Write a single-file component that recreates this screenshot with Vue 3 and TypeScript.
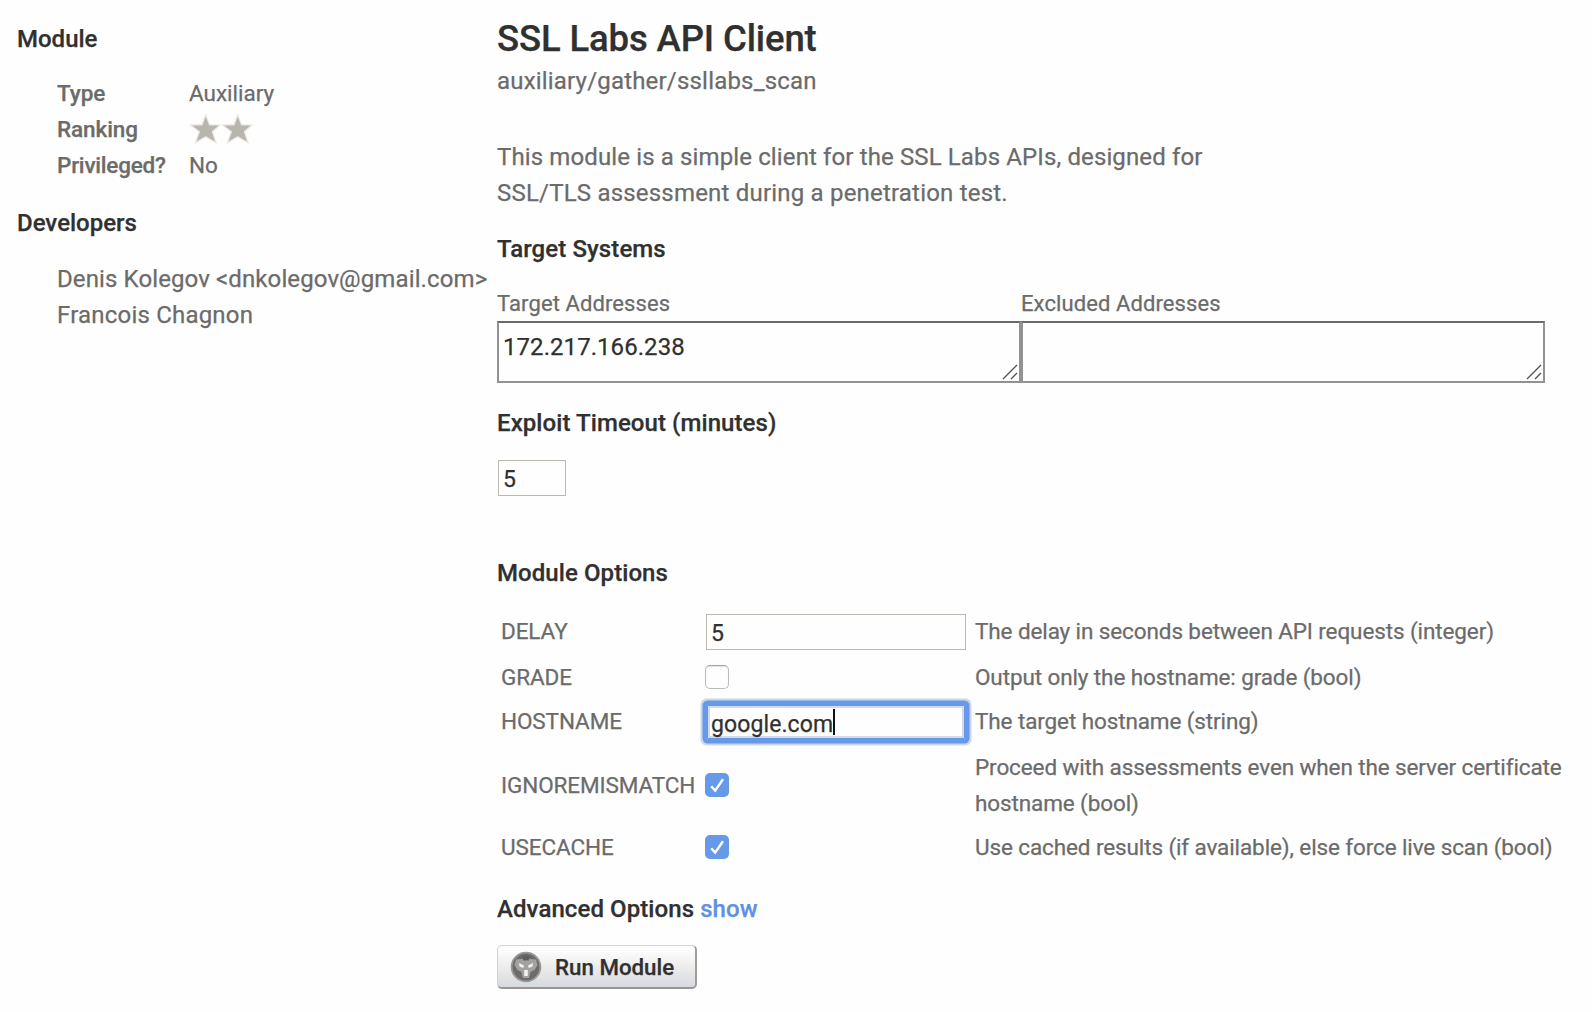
<script setup lang="ts">
interface Option {
  name: string
  kind: 'text' | 'focus' | 'off' | 'on'
  value?: string
  description: string[]
}

const options: Option[] = [
  { name: 'DELAY', kind: 'text', value: '5', description: ['The delay in seconds between API requests (integer)'] },
  { name: 'GRADE', kind: 'off', description: ['Output only the hostname: grade (bool)'] },
  { name: 'HOSTNAME', kind: 'focus', value: 'google.com', description: ['The target hostname (string)'] },
  { name: 'IGNOREMISMATCH', kind: 'on', description: ['Proceed with assessments even when the server certificate', 'hostname (bool)'] },
  { name: 'USECACHE', kind: 'on', description: ['Use cached results (if available), else force live scan (bool)'] },
]

const addressColumns = [
  { label: 'Target Addresses', value: '172.217.166.238' },
  { label: 'Excluded Addresses', value: '' },
]
</script>

<template>
  <div class="page">
    <aside class="side">
      <h3>Module</h3>
      <dl class="facts">
        <dt>Type</dt>
        <dd>Auxiliary</dd>
        <dt>Ranking</dt>
        <dd class="stars">
          <svg v-for="n in 2" :key="n" width="32" height="32" viewBox="0 0 32 32">
            <path d="M16.7 2 L20.5 11.8 L31 12 L23.4 18.8 L27 29.8 L16.7 23.8 L6.4 29.8 L10.4 18.8 L1.4 12 L13 11.8 Z" />
          </svg>
        </dd>
        <dt class="tight">Privileged?</dt>
        <dd>No</dd>
      </dl>
      <h3>Developers</h3>
      <p class="devs">Denis Kolegov &lt;dnkolegov@gmail.com&gt;<br><span class="wide">Francois Chagnon</span></p>
    </aside>

    <main class="main">
      <h1>SSL Labs API Client</h1>
      <p class="path">auxiliary/gather/ssllabs_scan</p>
      <p class="about">This module is a simple client for the SSL Labs APIs, designed for<br><span class="wide">SSL/TLS assessment during a penetration test.</span></p>

      <h3 class="h-target">Target Systems</h3>
      <div class="addresses">
        <div v-for="c in addressColumns" :key="c.label" class="col">
          <label>{{ c.label }}</label>
          <div class="area">
            {{ c.value }}
            <svg class="grip" width="16" height="16" viewBox="0 0 16 16"><path d="M1 15 L15 1 M9 15 L15 9" /></svg>
          </div>
        </div>
      </div>

      <h3 class="h-timeout">Exploit Timeout (minutes)</h3>
      <div class="field small">5</div>

      <h3 class="h-options">Module Options</h3>
      <div class="options">
        <div v-for="o in options" :key="o.name" class="row">
          <div class="name">{{ o.name }}</div>
          <div class="control">
            <div v-if="o.kind === 'text'" class="field">{{ o.value }}</div>
            <div v-else-if="o.kind === 'focus'" class="field focus">{{ o.value }}<i class="caret"></i></div>
            <div v-else class="check" :class="o.kind">
              <svg v-if="o.kind === 'on'" width="24" height="24" viewBox="0 0 24 24"><path d="M6.2 13.2 L10.2 17.6 L18 6.3" /></svg>
            </div>
          </div>
          <div class="desc"><template v-for="(d, i) in o.description" :key="i"><br v-if="i">{{ d }}</template></div>
        </div>
      </div>

      <h3 class="h-advanced">Advanced Options <a>show</a></h3>
      <button class="run" type="button">
        <svg width="32" height="32" viewBox="0 0 32 32">
          <circle cx="16" cy="16" r="14.4" fill="#6c6c6c" stroke="#9b9a98" stroke-width="1.8" />
          <path d="M16 4.5 L20 8 L26 8.5 L27.5 14 L24.5 19 L20.5 21 L19 27 H13 L11.5 21 L7.5 19 L4.5 14 L6 8.5 L12 8 Z" fill="#a3a2a0" />
          <path d="M11.5 5.5 Q16 3 20.5 5.5 L18.5 9.5 H13.5 Z" fill="#5f5f5f" />
          <path d="M9 12 L14 14.5 L13.2 17 L9.5 15.5 Z M23 12 L18 14.5 L18.8 17 L22.5 15.5 Z M14.2 19 H17.8 V25 H14.2 Z" fill="#f2f2f0" />
        </svg>
        <span>Run Module</span>
      </button>
    </main>
  </div>
</template>

<style>
html, body { background: #fefefe; }
</style>

<style scoped>
.page {
  display: flex;
  width: 1592px;
  height: 1012px;
  overflow: hidden;
  font-family: Roboto, "Liberation Sans", sans-serif;
  font-size: 24px;
  line-height: 36px;
  color: #6b6b6b;
  -webkit-text-stroke: 0.25px currentColor;
}
h1, h3, p, dl, dd, dt { margin: 0; font-weight: 400; white-space: nowrap; }
h3 { font-size: 24px; font-weight: 500; color: #303030; letter-spacing: 0.08px; }

.side { flex: none; width: 480px; padding: 21px 0 0 17px; }
.side h3 { letter-spacing: 0; }
.facts { display: grid; grid-template-columns: 132px auto; padding: 18px 0 22px 40px; font-size: 22.5px; }
.facts dt { font-weight: 500; letter-spacing: -0.1px; }
.facts .tight { letter-spacing: -0.22px; }
.stars { display: flex; align-items: center; height: 36px; }
.stars path { fill: #b8b5ae; stroke: #e9e8e4; stroke-width: 1.2; }
.devs { padding: 20px 0 0 40px; letter-spacing: 0.11px; }
.wide { letter-spacing: 0.2px; }

.main { flex: 1; padding-top: 17px; }
h1 { font-size: 36.5px; line-height: 44px; font-weight: 500; color: #303030; letter-spacing: -0.13px; }
.path { margin-top: 2px; letter-spacing: 0.19px; }
.about { margin-top: 40px; letter-spacing: 0.125px; }
.h-target { margin-top: 20px; letter-spacing: 0.1px; }

.addresses { display: flex; margin-top: 19px; }
.col { width: 524px; font-size: 22px; }
.col label { display: block; height: 35px; letter-spacing: 0.1px; }
.area {
  position: relative;
  box-sizing: border-box;
  height: 62px;
  padding: 6px 4px;
  border: 2px solid #929292;
  border-top-color: #6b6b6b;
  background: #fefefe;
  color: #303030;
  font-size: 24px;
  letter-spacing: 0.06px;
}
.grip { position: absolute; right: 1px; bottom: 1px; }
.grip path { fill: none; stroke: #555; stroke-width: 1.4; }

.h-timeout { margin-top: 22px; }
.field {
  display: flex;
  box-sizing: border-box;
  width: 260px;
  height: 36px;
  padding: 1px 0 0 4px;
  border: 1px solid #bab8b0;
  background: #fefefe;
  color: #303030;
  font-size: 23px;
  letter-spacing: 0.1px;
}
.small { width: 68px; margin: 19px 0 0 1px; }

.h-options { margin-top: 59px; }
.options { margin-top: 17px; padding-left: 4px; font-size: 22.5px; }
.row { display: grid; grid-template-columns: 204px 270px 1fr; align-items: center; height: 46px; white-space: nowrap; }
.row:nth-child(3) { height: 42px; }
.row:nth-child(4) { height: 86px; }
.row:nth-child(5) { height: 38px; }
.name { letter-spacing: -0.1px; }
.desc { letter-spacing: -0.11px; }
.control .field { margin: 2px 0 0 1px; }
.control .focus {
  padding-top: 2px;
  border-color: #6699e8;
  border-radius: 2px;
  box-shadow: inset 0 0 0 1px #6699e8, inset 0 0 0 3px #d3dae8, 0 0 0 3.5px #6699e8, 0 0 0 5.5px #cdd5e6;
}
.caret { width: 2px; height: 26px; margin-top: 2px; background: #111; }
.check { box-sizing: border-box; width: 24px; height: 24px; border-radius: 5px; }
.off { border: 1.5px solid #b9babd; border-top-color: #a3a3a3; box-shadow: inset 0 1px 1px #e2e5ec; }
.on { background: #6699e8; }
.on svg { display: block; }
.on path { fill: none; stroke: #fff; stroke-width: 2.4; }

.h-advanced { margin-top: 25px; }
.h-advanced a { color: #5e90e4; letter-spacing: 0.1px; }
.run {
  display: flex;
  align-items: center;
  gap: 13px;
  box-sizing: border-box;
  width: 200px;
  height: 44px;
  margin-top: 18px;
  padding: 0 0 0 12px;
  border: 1px solid #cfd3dc;
  border-right: 2px solid #a09d99;
  border-bottom: 2px solid #989590;
  border-radius: 5px;
  background: linear-gradient(#fdfdfd 10%, #ebebea 55%, #d6d9e0);
  color: #303030;
  font: 500 22.3px Roboto, "Liberation Sans", sans-serif;
  -webkit-text-stroke: 0.25px currentColor;
}
</style>
